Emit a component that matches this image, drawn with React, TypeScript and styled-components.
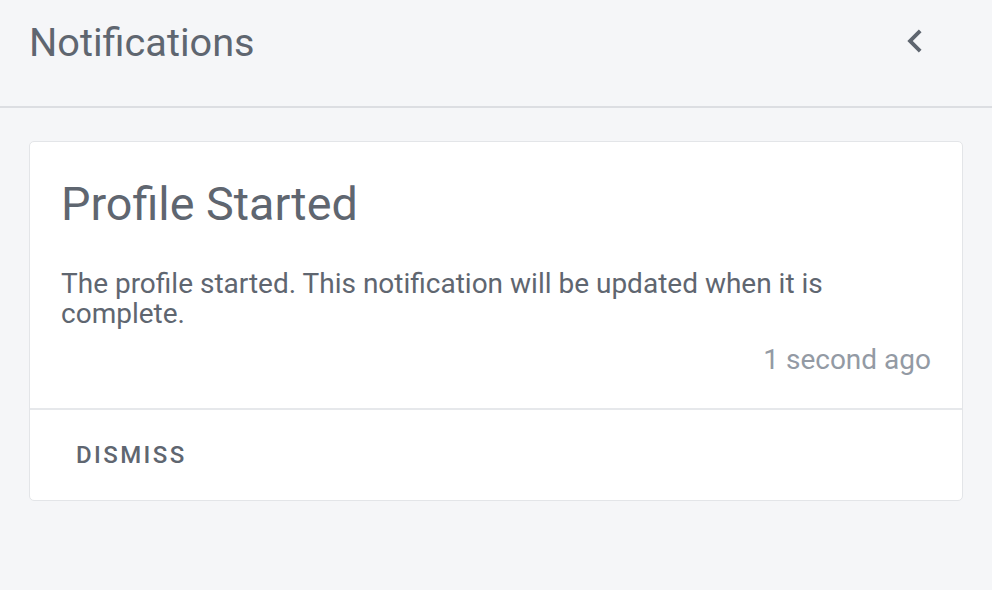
import React from "react";
import styled, { createGlobalStyle } from "styled-components";

const Global = createGlobalStyle`
  html, body {
    margin: 0;
    padding: 0;
    background: #f5f6f8;
  }
  body {
    font-family: Roboto, "Noto Sans", sans-serif;
    color: #5f6670;
  }
`;

const Page = styled.div`
  width: 992px;
  min-height: 590px;
  background: #f5f6f8;
  display: flex;
  flex-direction: column;
`;

const Header = styled.header`
  height: 108px;
  box-sizing: border-box;
  border-bottom: 2px solid #dcdee2;
  display: flex;
  align-items: flex-start;
  justify-content: space-between;
  padding: 18px 54px 0 29px;
`;

const Title = styled.h1`
  margin: 0;
  font-size: 39.7px;
  font-weight: 400;
  line-height: 50px;
  color: #5f6670;
`;

const IconButton = styled.button`
  border: none;
  background: transparent;
  padding: 0;
  width: 46px;
  height: 46px;
  display: flex;
  align-items: center;
  justify-content: center;
  color: #5f6670;
  cursor: pointer;
`;

const Content = styled.main`
  padding: 33px 29px;
`;

const Card = styled.section`
  background: #ffffff;
  border: 1px solid #e3e5e8;
  border-radius: 5px;
  display: flex;
  flex-direction: column;
`;

const CardBody = styled.div`
  padding: 32px 31px 33px 31px;
  display: flex;
  flex-direction: column;
`;

const CardTitle = styled.h2`
  margin: 0;
  font-size: 46.7px;
  font-weight: 400;
  line-height: 60px;
  color: #5f6670;
`;

const Message = styled.p`
  margin: 35px 0 0;
  font-size: 28px;
  line-height: 30px;
  color: #5f6670;
`;

const Time = styled.div`
  margin-top: 16px;
  align-self: flex-end;
  font-size: 28px;
  line-height: 30px;
  color: #939aa4;
`;

const Actions = styled.div`
  border-top: 2px solid #e6e8eb;
  padding: 30px 46px 30px;
  display: flex;
`;

const TextButton = styled.button`
  border: none;
  background: transparent;
  padding: 0;
  font-family: Roboto, sans-serif;
  font-size: 24px;
  font-weight: 500;
  letter-spacing: 2.4px;
  text-transform: uppercase;
  color: #5f6670;
  line-height: 30px;
  cursor: pointer;
`;

const ChevronLeft = () => (
  <svg width="46" height="46" viewBox="0 0 24 24" fill="currentColor">
    <path d="M15.41 7.41L14 6l-6 6 6 6 1.41-1.41L10.83 12z" />
  </svg>
);

export default function App() {
  return (
    <Page>
      <Global />
      <Header>
        <Title>Notifications</Title>
        <IconButton aria-label="Collapse">
          <ChevronLeft />
        </IconButton>
      </Header>
      <Content>
        <Card>
          <CardBody>
            <CardTitle>Profile Started</CardTitle>
            <Message>
              The profile started. This notification will be updated when it is complete.
            </Message>
            <Time>1 second ago</Time>
          </CardBody>
          <Actions>
            <TextButton>Dismiss</TextButton>
          </Actions>
        </Card>
      </Content>
    </Page>
  );
}
